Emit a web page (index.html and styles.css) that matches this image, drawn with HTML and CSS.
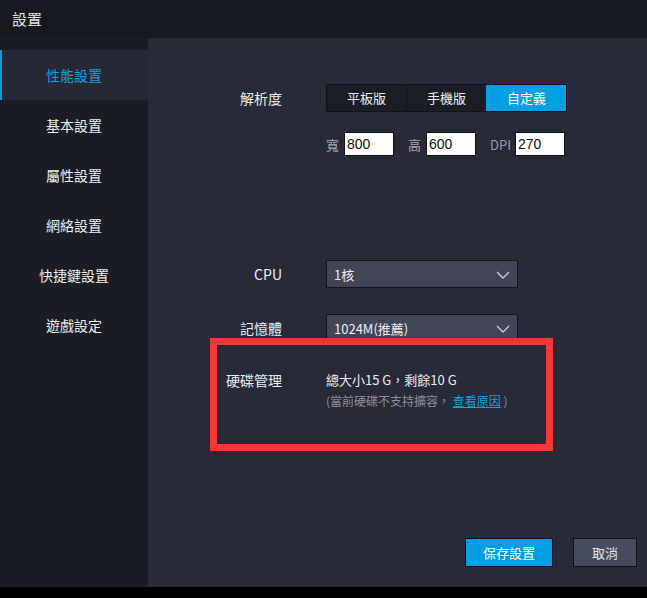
FILE: index.html
```html
<!DOCTYPE html>
<html lang="zh-TW">
<head>
    <meta charset="UTF-8">
    <title>設置</title>
    <link rel="stylesheet" href="styles.css">
</head>
<body>

<div class="titlebar">設置</div>

<div class="main">
    <!-- 左側選單 -->
    <ul class="sidebar">
        <li class="menu-item active">性能設置</li>
        <li class="menu-item">基本設置</li>
        <li class="menu-item">屬性設置</li>
        <li class="menu-item">網絡設置</li>
        <li class="menu-item">快捷鍵設置</li>
        <li class="menu-item">遊戲設定</li>
    </ul>

    <div class="content">
        <div class="row">
            <span class="row-label">解析度</span>
            <div class="segmented">
                <div class="seg">平板版</div>
                <div class="seg">手機版</div>
                <div class="seg selected">自定義</div>
            </div>
        </div>

        <div class="dims">
            <span class="dim-label">寬</span>
            <input class="dim-input" type="text" value="800">
            <span class="dim-label">高</span>
            <input class="dim-input" type="text" value="600">
            <span class="dim-label dpi">DPI</span>
            <input class="dim-input" type="text" value="270">
        </div>

        <div class="row cpu-row">
            <span class="row-label">CPU</span>
            <div class="select">
                <span>1核</span>
                <svg class="chevron" width="14" height="8" viewBox="0 0 14 8"><polyline points="1,1 7,7 13,1" fill="none" stroke="#c9ccd6" stroke-width="1.4"/></svg>
            </div>
        </div>

        <div class="row mem-row">
            <span class="row-label">記憶體</span>
            <div class="select">
                <span>1024M(推薦)</span>
                <svg class="chevron" width="14" height="8" viewBox="0 0 14 8"><polyline points="1,1 7,7 13,1" fill="none" stroke="#c9ccd6" stroke-width="1.4"/></svg>
            </div>
        </div>

        <div class="row disk-row">
            <span class="row-label">硬碟管理</span>
            <div class="disk-info">
                <p class="disk-size">總大小15 G，剩餘10 G</p>
                <p class="disk-note">(當前硬碟不支持擴容， <a href="#" class="link">查看原因</a> )</p>
            </div>
        </div>

        <!-- 標註框 -->
        <div class="highlight"></div>

        <div class="actions">
            <button class="btn btn-primary">保存設置</button>
            <button class="btn btn-cancel">取消</button>
        </div>
    </div>
</div>

</body>
</html>
```

FILE: styles.css
```css
body {
    margin: 0;
    padding: 0;
    background-color: #000;
    font-family: "Noto Sans CJK TC", "Liberation Sans", sans-serif;
    font-size: 14px;
    color: #e8e9ee;
    width: 647px;
    height: 598px;
    overflow: hidden;
}

.titlebar {
    height: 38px;
    line-height: 38px;
    padding-left: 12px;
    font-size: 15px;
    color: #e4e5ea;
    background-color: #171a21;
}

.main {
    display: flex;
    height: 549px;
}

/* 左側選單 */
.sidebar {
    list-style: none;
    margin: 0;
    padding: 12px 0 0 0;
    width: 148px;
    flex-shrink: 0;
    background-color: #1b1d25;
}

.menu-item {
    height: 50px;
    line-height: 50px;
    text-align: center;
    color: #eceef2;
}

.menu-item.active {
    background-color: #252835;
    border-left: 2px solid #0a9be2;
    padding-right: 2px;
    color: #159fdc;
}

.content {
    position: relative;
    flex-grow: 1;
    display: flex;
    flex-direction: column;
    padding-top: 46px;
    background-color: #272a38;
}

.row {
    display: flex;
    align-items: center;
}

.row-label {
    width: 134px;
    margin-right: 44px;
    text-align: right;
    flex-shrink: 0;
    color: #eceef2;
}

/* 解析度選項 */
.segmented {
    display: flex;
    height: 28px;
    border: 1px solid #111318;
    box-sizing: border-box;
    background-color: #1c1e27;
}

.seg {
    width: 79px;
    line-height: 26px;
    text-align: center;
    font-size: 13px;
    color: #eceef2;
}

.seg + .seg {
    border-left: 1px solid #111318;
}

.seg.selected {
    background-color: #019fe3;
    color: #fff;
    border-left-color: #019fe3;
}

.dims {
    display: flex;
    align-items: center;
    margin-top: 20px;
    margin-left: 178px;
    height: 24px;
}

.dim-label {
    color: #a7a9b3;
    font-size: 13px;
    margin-right: 5px;
}

.dim-label.dpi {
    margin-right: 4px;
    color: #9d9fa9;
}

.dim-input {
    width: 50px;
    height: 24px;
    box-sizing: border-box;
    border: 1px solid #101217;
    padding: 0 0 0 2px;
    margin: 0 14px 0 0;
    font-family: "Liberation Sans", sans-serif;
    font-size: 14px;
    color: #111;
    background-color: #fff;
    outline: none;
}

.cpu-row {
    margin-top: 104px;
}

.mem-row {
    margin-top: 26px;
}

.select {
    display: flex;
    align-items: center;
    justify-content: space-between;
    width: 192px;
    height: 28px;
    box-sizing: border-box;
    border: 1px solid #14161c;
    padding: 0 7px 0 7px;
    background-color: #414557;
    font-size: 13px;
    color: #eceef2;
}

.chevron {
    margin-top: 1px;
}

/* 硬碟管理 */
.disk-row {
    margin-top: 28px;
    align-items: flex-start;
}

.disk-row .row-label {
    line-height: 20px;
}

.disk-info p {
    margin: 0;
    line-height: 20px;
}

.disk-size {
    font-size: 13px;
    color: #eceef2;
}

.disk-note {
    margin-top: 1px !important;
    font-size: 12px;
    color: #8e909b;
}

.link {
    color: #14a3dd;
}

.highlight {
    position: absolute;
    left: 62px;
    top: 300px;
    width: 343px;
    height: 113px;
    box-sizing: border-box;
    border: 7px solid #fd3437;
}

.actions {
    display: flex;
    justify-content: flex-end;
    gap: 20px;
    margin-top: auto;
    padding: 0 10px 20px 0;
}

.btn {
    height: 29px;
    border: 1px solid #101217;
    font-family: "Noto Sans CJK TC", sans-serif;
    font-size: 13px;
    color: #fff;
    cursor: pointer;
}

.btn-primary {
    width: 88px;
    background-color: #009fe4;
}

.btn-cancel {
    width: 64px;
    background-color: #474b5e;
    color: #e3e4ea;
}
```
